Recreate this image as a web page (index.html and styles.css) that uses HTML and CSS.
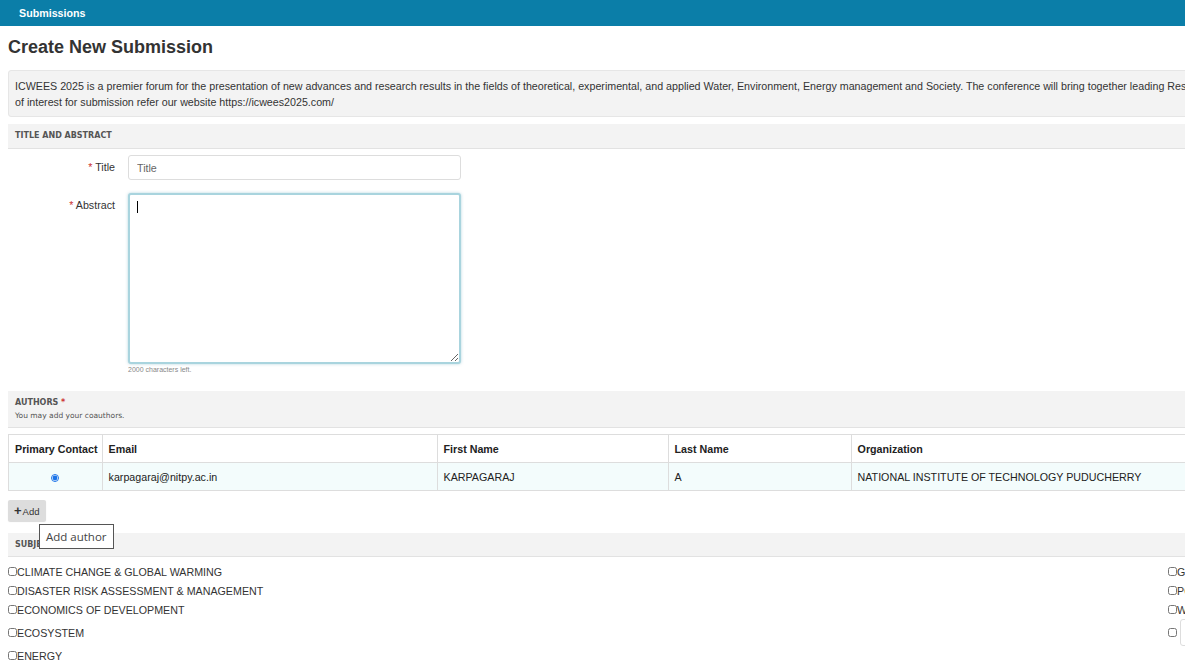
FILE: index.html
```html
<!DOCTYPE html>
<html lang="en">
<head>
    <meta charset="UTF-8">
    <meta name="viewport" content="width=device-width, initial-scale=1.0">
    <title>Create New Submission</title>
    <link rel="stylesheet" href="styles.css">
</head>
<body>
    <div class="topbar">Submissions</div>

    <div class="page">
        <h1>Create New Submission</h1>

        <div class="intro">
            ICWEES 2025 is a premier forum for the presentation of new advances and research results in the fields of theoretical, experimental, and applied Water, Environment, Energy management and Society. The conference will bring together leading Researchers, Engineers and Scientists in the domain of interest from around the world. For the list of topics<br>
            of interest for submission refer our website https://icwees2025.com/
        </div>

        <div class="section-head">Title and Abstract</div>

        <div class="form-row">
            <label class="form-label" for="title"><span class="req">*</span> Title</label>
            <input class="text-input" id="title" type="text" placeholder="Title">
        </div>

        <div class="form-row">
            <label class="form-label" for="abstract"><span class="req">*</span> Abstract</label>
            <div>
                <div class="abstract-wrap">
                    <textarea class="abstract" id="abstract"></textarea>
                    <span class="caret"></span>
                </div>
                <div class="chars-left">2000 characters left.</div>
            </div>
        </div>

        <div class="section-head tall">
            <div>Authors <span class="req">*</span></div>
            <div class="hint">You may add your coauthors.</div>
        </div>

        <table class="authors">
            <thead>
                <tr>
                    <th class="col-primary">Primary Contact</th>
                    <th class="col-email">Email</th>
                    <th class="col-first">First Name</th>
                    <th class="col-last">Last Name</th>
                    <th>Organization</th>
                </tr>
            </thead>
            <tbody>
                <tr>
                    <td class="center"><input type="radio" name="primary" checked></td>
                    <td>karpagaraj@nitpy.ac.in</td>
                    <td>KARPAGARAJ</td>
                    <td>A</td>
                    <td>NATIONAL INSTITUTE OF TECHNOLOGY PUDUCHERRY</td>
                </tr>
            </tbody>
        </table>

        <div class="add-wrap">
            <button class="add-btn"><b>+</b>Add</button>
            <div class="tooltip">Add author</div>
        </div>

        <div class="section-head short">Subjects</div>

        <div class="subjects">
            <label class="subject"><input type="checkbox">CLIMATE CHANGE &amp; GLOBAL WARMING</label>
            <label class="subject"><input type="checkbox">GEOSPATIAL TECHNOLOGIES</label>
            <label class="subject"><input type="checkbox">DISASTER RISK ASSESSMENT &amp; MANAGEMENT</label>
            <label class="subject"><input type="checkbox">POLLUTION CONTROL</label>
            <label class="subject"><input type="checkbox">ECONOMICS OF DEVELOPMENT</label>
            <label class="subject"><input type="checkbox">WATER RESOURCES MANAGEMENT</label>
            <label class="subject"><input type="checkbox">ECOSYSTEM</label>
            <label class="subject"><input type="checkbox"><input class="other-input" type="text"></label>
            <label class="subject"><input type="checkbox">ENERGY</label>
        </div>
    </div>
</body>
</html>
```

FILE: styles.css
```css
html, body {
    overflow: hidden;
}
body {
    margin: 0;
    font-family: "Liberation Sans", Arial, sans-serif;
    font-size: 10.7px;
    color: #333;
    background: #fff;
}
.topbar {
    height: 26px;
    line-height: 26px;
    padding-left: 19px;
    background-color: #0b7ea8;
    color: #fff;
    font-weight: bold;
    font-size: 10.7px;
}
.page {
    width: 2320px;
    padding: 0 8px;
}
h1 {
    font-size: 18px;
    line-height: 22px;
    margin: 10px 0 12px 0;
    color: #333;
}
.intro {
    background-color: #f3f3f3;
    border: 1px solid #e6e6e6;
    border-radius: 3px;
    padding: 7px 6px 6px 6px;
    line-height: 16px;
    margin-bottom: 7px;
}
.section-head {
    background-color: #f3f3f3;
    border-bottom: 1px solid #e2e2e2;
    padding: 0 7px;
    height: 24px;
    line-height: 24px;
    font-family: "DejaVu Sans", Verdana, sans-serif;
    font-size: 8px;
    font-weight: bold;
    text-transform: uppercase;
    color: #555;
}
.section-head.short {
    height: 23px;
    line-height: 23px;
}
.section-head.tall {
    height: auto;
    line-height: 13px;
    padding: 5px 7px;
    margin-top: 17px;
}
.section-head .hint {
    font-weight: normal;
    text-transform: none;
    font-size: 7.5px;
    color: #555;
}
.req {
    color: #c33;
}
.form-row {
    display: flex;
    align-items: flex-start;
    margin-top: 6px;
}
.form-row + .form-row {
    margin-top: 13px;
}
.form-label {
    width: 107px;
    margin-right: 13px;
    text-align: right;
    padding-top: 6px;
    color: #333;
}
.text-input {
    box-sizing: border-box;
    width: 333px;
    height: 25px;
    border: 1px solid #ddd;
    border-radius: 3px;
    padding: 0 8px;
    font-family: inherit;
    font-size: 10.7px;
    color: #333;
}
.text-input::placeholder {
    color: #666;
}
.abstract-wrap {
    position: relative;
}
.abstract {
    box-sizing: border-box;
    display: block;
    width: 333px;
    height: 171px;
    border: 2px solid #a9d4de;
    border-radius: 3px;
    box-shadow: 0 0 3px rgba(100, 170, 190, 0.5);
    outline: none;
    padding: 6px 8px;
    font-family: inherit;
    font-size: 10.7px;
}
.caret {
    position: absolute;
    left: 9px;
    top: 8px;
    width: 1px;
    height: 12px;
    background: #000;
}
.chars-left {
    font-size: 7px;
    line-height: 9px;
    color: #888;
    margin-top: 1px;
}
table.authors {
    width: 100%;
    margin-top: 6px;
    border-collapse: collapse;
    font-size: 10.7px;
}
.authors th, .authors td {
    border: 1px solid #ddd;
    height: 27px;
    padding: 0 6px;
    text-align: left;
    color: #222;
    white-space: nowrap;
}
.authors th {
    font-weight: bold;
    background: #fff;
}
.authors th.col-primary {
    padding-right: 4px;
}
.authors tbody tr {
    background-color: #f3fcfc;
}
.authors td.center {
    text-align: center;
}
.col-primary { width: 81px; }
.col-email { width: 322px; }
.col-first { width: 218px; }
.col-last { width: 170px; }
.authors input[type="radio"] {
    width: 8px;
    height: 8px;
    margin: 0;
    accent-color: #1a73e8;
    vertical-align: middle;
}
.add-wrap {
    position: relative;
    margin-top: 9px;
    margin-bottom: 12px;
    height: 21px;
}
.add-btn {
    height: 21px;
    padding: 0 6px;
    border: none;
    border-radius: 2px;
    background-color: #ddd;
    box-shadow: 0 1px 1px rgba(0, 0, 0, 0.15);
    font-family: inherit;
    font-size: 9.5px;
    color: #333;
}
.add-btn b {
    font-size: 13px;
    margin-right: 1px;
}
.tooltip {
    position: absolute;
    left: 31px;
    top: 24px;
    z-index: 2;
    background: #fff;
    border: 1px solid #555;
    padding: 0 6px;
    height: 23px;
    line-height: 23px;
    font-family: "Open Sans", "Noto Sans", sans-serif;
    font-size: 11.5px;
    color: #444;
}
.subjects {
    display: grid;
    grid-template-columns: 1160px 1160px;
    grid-auto-rows: auto;
    align-items: center;
    margin-top: 5px;
}
.subject {
    display: flex;
    align-items: center;
    min-height: 19px;
    font-size: 10.7px;
    color: #333;
}
.subject input[type="checkbox"] {
    width: 9px;
    height: 9px;
    margin: 0;
    flex-shrink: 0;
}
.other-input {
    box-sizing: border-box;
    height: 27px;
    width: 200px;
    margin-left: 3px;
    border: 1px solid #ddd;
    border-radius: 3px;
}
```
